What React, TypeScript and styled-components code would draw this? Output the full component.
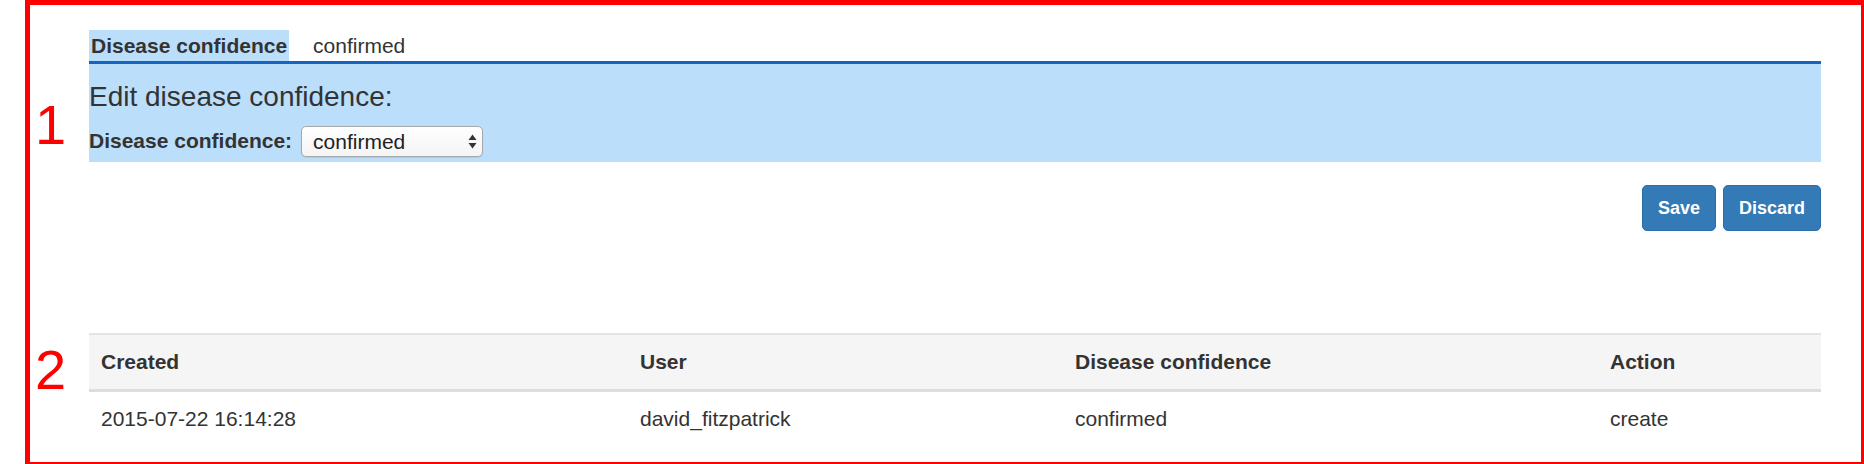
import React from "react";
import styled, { createGlobalStyle } from "styled-components";

const GlobalStyle = createGlobalStyle`
  html, body {
    margin: 0;
    padding: 0;
    background: #ffffff;
    overflow: hidden;
  }
  body {
    font-family: "Liberation Sans", Helvetica, Arial, sans-serif;
    color: #333333;
  }
`;

const Frame = styled.div`
  position: relative;
  box-sizing: border-box;
  margin-left: 25px;
  width: 1841px;
  height: 467px;
  border: 5px solid #ff0000;
  padding: 25px 40px 0 59px;
`;

const Marker = styled.span<{ $top: number }>`
  position: absolute;
  left: 5px;
  top: ${(p) => p.$top}px;
  font-family: "Liberation Sans", Arial, sans-serif;
  font-size: 56px;
  line-height: 1;
  color: #ff0000;
`;

const Summary = styled.div`
  display: flex;
  height: 31px;
  font-size: 21px;
  line-height: 31px;
`;

const SummaryLabel = styled.span`
  background: #bbdefb;
  font-weight: bold;
  padding: 0 2px;
  color: #333333;
`;

const SummaryValue = styled.span`
  margin-left: 24px;
  color: #333333;
`;

const EditPanel = styled.div`
  background: #bbdefb;
  border-top: 3px solid #1565c0;
  height: 101px;
  box-sizing: border-box;
  padding-top: 18px;
`;

const PanelHeading = styled.h4`
  margin: 0;
  font-size: 28px;
  font-weight: normal;
  line-height: 30px;
  color: #333333;
`;

const FormRow = styled.div`
  display: flex;
  align-items: center;
  margin-top: 14px;
  height: 30px;
`;

const FieldLabel = styled.label`
  font-size: 21px;
  font-weight: bold;
  margin-right: 9px;
  color: #333333;
`;

const SelectWrap = styled.div`
  position: relative;
  width: 182px;
  height: 31px;
`;

const Select = styled.select`
  appearance: none;
  -webkit-appearance: none;
  box-sizing: border-box;
  width: 100%;
  height: 100%;
  margin: 0;
  border: 1px solid #a8a8a8;
  border-radius: 5px;
  background: linear-gradient(#ffffff, #f4f4f4);
  font-family: "Liberation Sans", Helvetica, Arial, sans-serif;
  font-size: 21px;
  color: #222222;
  padding: 0 0 0 11px;
  box-shadow: 0 1px 1px rgba(0, 0, 0, 0.08);
`;

const Arrows = styled.svg`
  position: absolute;
  right: 6px;
  top: 8px;
  pointer-events: none;
`;

const Actions = styled.div`
  display: flex;
  justify-content: flex-end;
  gap: 7px;
  margin-top: 23px;
`;

const Button = styled.button`
  box-sizing: border-box;
  height: 46px;
  padding: 0 15px;
  background: #337ab7;
  border: 1px solid #2e6da4;
  border-radius: 5px;
  color: #ffffff;
  font-family: "Liberation Sans", Helvetica, Arial, sans-serif;
  font-size: 18px;
  font-weight: bold;
`;

const Table = styled.table`
  margin-top: 102px;
  width: 100%;
  border-collapse: collapse;
  table-layout: fixed;
  font-size: 21px;
  color: #333333;
`;

const Th = styled.th`
  background: #f5f5f5;
  text-align: left;
  font-weight: bold;
  padding: 12px;
  line-height: 30px;
  border-top: 2px solid #e4e4e4;
  border-bottom: 3px solid #dddddd;
`;

const Td = styled.td`
  padding: 12px;
  line-height: 30px;
`;

const columns = [
  { title: "Created", width: 539 },
  { title: "User", width: 435 },
  { title: "Disease confidence", width: 535 },
  { title: "Action", width: 223 },
];

const rows = [["2015-07-22 16:14:28", "david_fitzpatrick", "confirmed", "create"]];

export default function App() {
  return (
    <>
      <GlobalStyle />
      <Frame>
        <Marker $top={92}>1</Marker>
        <Marker $top={337}>2</Marker>
        <Summary>
          <SummaryLabel>Disease confidence</SummaryLabel>
          <SummaryValue>confirmed</SummaryValue>
        </Summary>
        <EditPanel>
          <PanelHeading>Edit disease confidence:</PanelHeading>
          <FormRow>
            <FieldLabel htmlFor="dc">Disease confidence:</FieldLabel>
            <SelectWrap>
              <Select id="dc" defaultValue="confirmed">
                <option value="confirmed">confirmed</option>
                <option value="probable">probable</option>
                <option value="possible">possible</option>
              </Select>
              <Arrows width="9" height="15" viewBox="0 0 9 15">
                <polygon points="0.5,6 4.5,0.5 8.5,6" fill="#333" />
                <polygon points="0.5,9 4.5,14.5 8.5,9" fill="#333" />
              </Arrows>
            </SelectWrap>
          </FormRow>
        </EditPanel>
        <Actions>
          <Button>Save</Button>
          <Button>Discard</Button>
        </Actions>
        <Table>
          <colgroup>
            {columns.map((c) => (
              <col key={c.title} style={{ width: c.width }} />
            ))}
          </colgroup>
          <thead>
            <tr>
              {columns.map((c) => (
                <Th key={c.title}>{c.title}</Th>
              ))}
            </tr>
          </thead>
          <tbody>
            {rows.map((r, i) => (
              <tr key={i}>
                {r.map((cell, j) => (
                  <Td key={j}>{cell}</Td>
                ))}
              </tr>
            ))}
          </tbody>
        </Table>
      </Frame>
    </>
  );
}
